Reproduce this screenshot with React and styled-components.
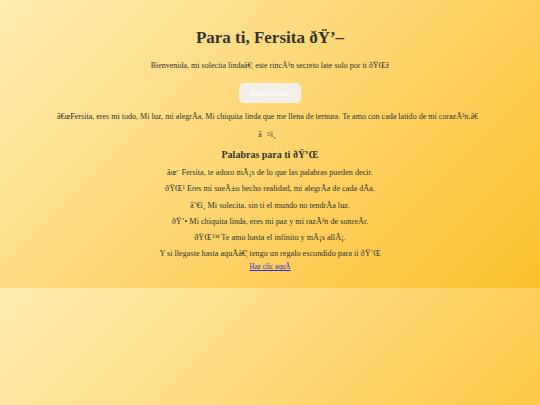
import React from "react";
import styled, { createGlobalStyle } from "styled-components";

const Global = createGlobalStyle`
  html { margin: 0; padding: 0; }
  body {
    margin: 0;
    padding: 0;
    font-family: "Liberation Serif", "Times New Roman", serif;
    color: #333;
    background: linear-gradient(135deg, #ffecb3, #fbc02d);
  }
`;

const Page = styled.main`
  display: flex;
  flex-direction: column;
  align-items: center;
  text-align: center;
  padding: 28px 20px 15px;
`;

const Title = styled.h1`
  margin: 0;
  font-size: 17px;
  font-weight: bold;
  line-height: 20px;
`;

const Subtitle = styled.p`
  margin: 12px 0 0;
  font-size: 8px;
  line-height: 12px;
`;

const RevealButton = styled.button`
  margin-top: 11px;
  width: 62px;
  height: 20px;
  border: none;
  border-radius: 5px;
  background: #f3efe8;
  color: #fff;
  font-family: "Liberation Sans", Arial, sans-serif;
  font-size: 7px;
  padding: 0;
`;

const Quote = styled.p`
  margin: 8px 0 0;
  font-size: 8.05px;
  line-height: 12px;
`;

const Hearts = styled.p`
  margin: 6px 0 0;
  font-size: 8px;
  line-height: 12px;
`;

const Heading = styled.h2`
  margin: 7px 0 0;
  font-size: 10px;
  font-weight: bold;
  line-height: 14px;
`;

const Lines = styled.div`
  display: flex;
  flex-direction: column;
  gap: 4.3px;
  margin-top: 5px;
`;

const Line = styled.p`
  margin: 0;
  font-size: 8.2px;
  line-height: 12px;
`;

const Link = styled.a`
  margin-top: 1px;
  font-size: 7.2px;
  line-height: 12px;
  white-space: nowrap;
  color: #2a2ad8;
  text-decoration: underline;
`;

const lines = [
  "âœ¨ Fersita, te adoro mÃ¡s de lo que las palabras pueden decir.",
  "ðŸŒ¹ Eres mi sueÃ±o hecho realidad, mi alegrÃ\u00ada de cada dÃ\u00ada.",
  "â˜€ï¸ Mi solecita, sin ti el mundo no tendrÃ\u00ada luz.",
  "ðŸ’• Mi chiquita linda, eres mi paz y mi razÃ³n de sonreÃ\u00adr.",
  "ðŸŒ™ Te amo hasta el infinito y mÃ¡s allÃ¡.",
  "Y si llegaste hasta aquÃ\u00adâ€¦ tengo un regalo escondido para ti ðŸ’Œ",
];

export default function App() {
  return (
    <>
      <Global />
      <Page>
        <Title>Para ti, Fersita ðŸ’–</Title>
        <Subtitle>
          Bienvenida, mi solecita lindaâ€¦ este rincÃ³n secreto late solo por ti ðŸŒž
        </Subtitle>
        <RevealButton>DescÃºbrelo</RevealButton>
        <Quote>
          â€œFersita, eres mi todo, Mi luz, mi alegrÃ{"\u00ad"}a, Mi chiquita linda que me llena de
          ternura. Te amo con cada latido de mi corazÃ³n.â€{"\u009d"}
        </Quote>
        <Hearts>â{"\u009d"}¤ï¸{"\u008f"}</Hearts>
        <Heading>Palabras para ti ðŸ’Œ</Heading>
        <Lines>
          {lines.map((l) => (
            <Line key={l}>{l}</Line>
          ))}
        </Lines>
        <Link href="#">Haz clic aquÃ{"\u00ad"}</Link>
      </Page>
    </>
  );
}
